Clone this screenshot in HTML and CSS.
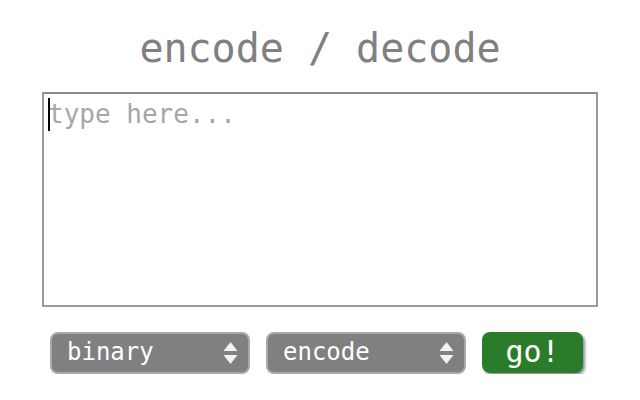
FILE: index.html
```html
<!DOCTYPE html>
<html lang="en">
<head>
    <meta charset="UTF-8">
    <meta name="viewport" content="width=device-width, initial-scale=1.0">
    <title>encode / decode</title>
    <link rel="stylesheet" href="styles.css">
</head>
<body>

<main class="app">
    <h1 class="title">encode / decode</h1>

    <div class="editor">
        <textarea class="input" id="input" placeholder="type here..." autofocus></textarea>
        <span class="caret"></span>
    </div>

    <div class="controls">
        <div class="picker">
            <select id="scheme">
                <option>binary</option>
                <option>hex</option>
                <option>base64</option>
                <option>rot13</option>
            </select>
            <svg class="picker-arrows" width="15" height="24" viewBox="0 0 15 24">
                <path d="M7.5 1 L14.5 10 L0.5 10 Z" />
                <path d="M0.5 14 L14.5 14 L7.5 23 Z" />
            </svg>
        </div>
        <div class="picker">
            <select id="direction">
                <option>encode</option>
                <option>decode</option>
            </select>
            <svg class="picker-arrows" width="15" height="24" viewBox="0 0 15 24">
                <path d="M7.5 1 L14.5 10 L0.5 10 Z" />
                <path d="M0.5 14 L14.5 14 L7.5 23 Z" />
            </svg>
        </div>
        <button class="go" id="go">go!</button>
    </div>
</main>

</body>
</html>
```

FILE: styles.css
```css
body {
    margin: 0;
    background-color: #fff;
    font-family: 'DejaVu Sans Mono', 'Liberation Mono', monospace;
}

.app {
    display: flex;
    flex-direction: column;
    align-items: center;
    padding-top: 25px;
}

.title {
    margin: 0 0 20px;
    font-size: 40px;
    line-height: 47px;
    font-weight: normal;
    color: #808080;
}

.editor {
    position: relative;
}

.input {
    display: block;
    box-sizing: border-box;
    width: 556px;
    height: 215px;
    margin: 0;
    padding: 5px 4px;
    border: 2px solid #9a9a9a;
    border-top-color: #8c8c8c;
    border-radius: 0;
    font-family: inherit;
    font-size: 26px;
    color: #333;
    caret-color: #000;
    resize: none;
    outline: none;
}

.input::placeholder {
    color: #a6a6a6;
}

.caret {
    position: absolute;
    left: 6px;
    top: 6px;
    width: 2px;
    height: 33px;
    background-color: #000;
    pointer-events: none;
}

.input:not(:placeholder-shown) + .caret {
    display: none;
}

.controls {
    box-sizing: border-box;
    width: 556px;
    display: flex;
    gap: 16px;
    margin-top: 25px;
    padding-left: 8px;
}

.picker {
    position: relative;
}

.picker select {
    box-sizing: border-box;
    width: 200px;
    height: 42px;
    padding: 0 34px 3px 15px;
    appearance: none;
    -webkit-appearance: none;
    background-color: #808080;
    border: 2px solid #a9a9a9;
    border-radius: 8px;
    color: #fff;
    font-family: inherit;
    font-size: 24px;
    outline: none;
}

/* up/down arrows sit over the right edge of the select */
.picker-arrows {
    position: absolute;
    right: 12px;
    top: 9px;
    fill: #f2f2f2;
    pointer-events: none;
}

.go {
    box-sizing: border-box;
    width: 101px;
    height: 41px;
    padding: 0 0 2px;
    background-color: #2a7c2a;
    border: none;
    border-radius: 8px;
    box-shadow: 2px 2px 3px rgba(0, 0, 0, 0.45);
    color: #fff;
    font-family: inherit;
    font-size: 30px;
    cursor: pointer;
}
```
